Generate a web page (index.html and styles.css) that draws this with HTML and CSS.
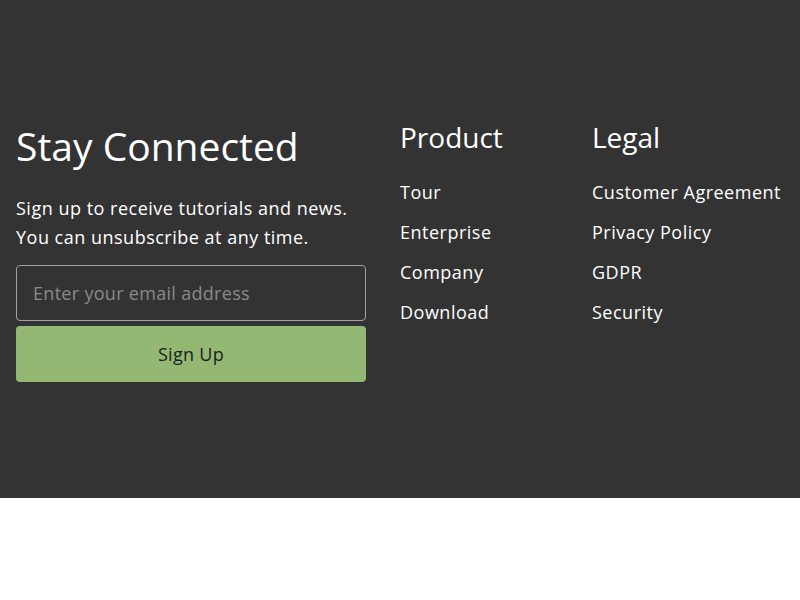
FILE: index.html
```html
<!DOCTYPE html>
<html>
<head>
<meta charset="utf-8">
<link rel="stylesheet" href="styles.css">
</head>
<body>
<footer class="footer">
  <div class="inner">
    <div class="signup">
      <h2 class="signup-title">Stay Connected</h2>
      <p class="signup-text">Sign up to receive tutorials and news.<br>You can unsubscribe at any time.</p>
      <form class="signup-form">
        <input class="email" type="email" placeholder="Enter your email address">
        <button class="btn" type="button">Sign Up</button>
      </form>
    </div>
    <div class="col">
      <h3 class="col-title">Product</h3>
      <ul class="links">
        <li><a href="#">Tour</a></li>
        <li><a href="#">Enterprise</a></li>
        <li><a href="#">Company</a></li>
        <li><a href="#">Download</a></li>
      </ul>
    </div>
    <div class="col">
      <h3 class="col-title">Legal</h3>
      <ul class="links">
        <li><a href="#">Customer Agreement</a></li>
        <li><a href="#">Privacy Policy</a></li>
        <li><a href="#">GDPR</a></li>
        <li><a href="#">Security</a></li>
      </ul>
    </div>
  </div>
</footer>
</body>
</html>
```

FILE: styles.css
```css
* { box-sizing: border-box; }
html, body { margin: 0; padding: 0; background: #fff; }
body { font-family: "Open Sans", "Liberation Sans", sans-serif; color: #fff; }

.footer {
  background: #333333;
  height: 498px;
  padding-top: 122px;
}
.inner {
  display: flex;
  padding-left: 16px;
}
.signup {
  width: 350px;
  margin-right: 34px;
}
.signup-title {
  margin: 0 0 24px;
  font-size: 39px;
  font-weight: 400;
  line-height: 48px;
}
.signup-text {
  margin: 0 0 13px;
  font-size: 18px;
  line-height: 29px;
  letter-spacing: 0.5px;
}
.signup-form { display: flex; flex-direction: column; gap: 5px; }
.email {
  height: 56px;
  padding: 0 16px;
  border: 1px solid #a0a0a0;
  border-radius: 4px;
  background: transparent;
  color: #fff;
  font: inherit;
  font-size: 18px;
  letter-spacing: 0.3px;
}
.email::placeholder { color: #8a8a8a; }
.btn {
  height: 56px;
  border: 0;
  border-radius: 4px;
  background: #93b874;
  color: #1c1c1c;
  font: inherit;
  font-size: 18px;
  letter-spacing: 0.3px;
}
.col { width: 192px; }
.col-title {
  margin: -2px 0 18px;
  font-size: 28px;
  font-weight: 400;
  line-height: 34px;
}
.links { list-style: none; margin: 0; padding: 0; }
.links li { font-size: 18px; line-height: 40px; letter-spacing: 0.5px; }
.links a { color: #fff; text-decoration: none; }
```
